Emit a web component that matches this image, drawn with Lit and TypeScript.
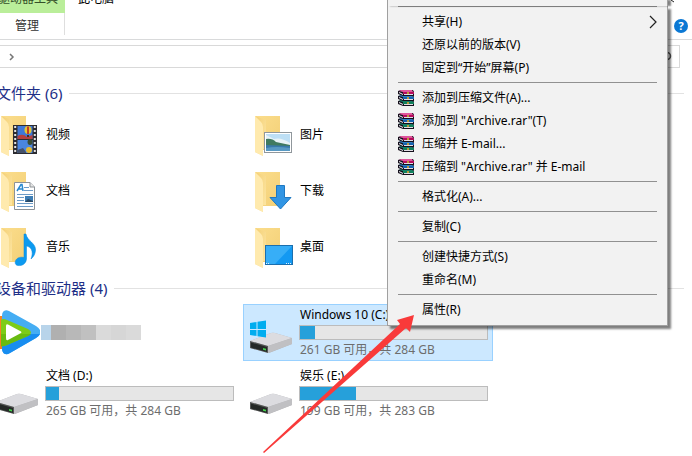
import { LitElement, html, svg, css } from "lit";
import { customElement, property } from "lit/decorators.js";

const folderBase = svg`
  <defs>
    <linearGradient id="back" x1="0" y1="0" x2="1" y2="1">
      <stop offset="0" stop-color="#fbdd8c" /><stop offset="1" stop-color="#f3d077" />
    </linearGradient>
    <linearGradient id="front" x1="0" y1="0" x2="1" y2="1">
      <stop offset="0" stop-color="#f4cf74" /><stop offset="1" stop-color="#fde7a6" />
    </linearGradient>
  </defs>
  <path d="M10 5H34V39H10Z" fill="url(#back)" />
  <path d="M9 5L20 9V38H17V45L9 41Z" fill="url(#front)" />
  <path d="M9 5L15 11Q17 13 17 16V45L9 41Z" fill="#ffeaae" />`;

const drive = svg`
  <path d="M4 32L25 24Q27 23.500 29 24L46 29V35L23 44L4 39Z" fill="#b4b4b7" />
  <path d="M4 32L25 24Q27 23.500 29 24L46 29L22 37Z" fill="#dcdce0" />
  <path d="M4 32L22 37V44L4 39Z" fill="#555756" />
  <path d="M5 33.500L21 38V43L5 38.500Z" fill="#252927" />
  <path d="M17 39L20 39.800V41.500L17 40.700Z" fill="#45d34e" />
  <path d="M22 37L46 29V35L22 44Z" fill="#c0c0c3" />`;

const pictures: Record<string, unknown> = {
  video: svg`${folderBase}
    <rect x="21" y="14" width="24" height="29" fill="#2c2c31" />
    <rect x="25.500" y="15" width="15" height="13" fill="#3f78d8" />
    <rect x="25.500" y="29" width="15" height="13" fill="#4a86e0" />
    <path d="M25.500 25Q31 22 35 26L40.500 24V28H25.500Z" fill="#b6403f" />
    <ellipse cx="36" cy="19" rx="3.500" ry="4" fill="#e6c631" />
    <path d="M35 15.500H37V23H35Z" fill="#c23c28" />
    <path d="M35 24H37V26H35Z" fill="#49301e" />
    <ellipse cx="38" cy="31" rx="2.500" ry="3" fill="#3a4c35" />
    <ellipse cx="37" cy="39" rx="3" ry="3" fill="#e6b931" />
    <path d="M25.500 39L31 37L34 41V42H25.500Z" fill="#45526b" />
    <path d="M23.200 15V43M42.800 15V43" stroke="#e4e4e4" stroke-width="2" stroke-dasharray="2 2" />`,
  documents: svg`${folderBase}
    <path d="M22.500 15.500H38L42.500 20V42.500H22.500Z" fill="#fff" stroke="#8d9296" />
    <path d="M38 15.500V20H42.500" fill="#e6e6e6" stroke="#8d9296" />
    <path d="M25 24L29 17.500H30L31 24M26.500 22H31" fill="none" stroke="#2989cf" stroke-width="1.500" />
    <path d="M32 20.500H37M32 23.500H41M25 27.500H41M25 30.500H32M25 33.500H32M25 36.500H41M25 39.500H41" stroke="#6d9cc8" />
    <rect x="33" y="29" width="8" height="6" fill="#3e7eb5" />
    <path d="M33 35L36 32L41 34V35Z" fill="#294a67" />`,
  music: svg`${folderBase}
    <path d="M32 11H34C35 18 44 20 43.500 27C43.300 31 41.500 34 39 36C42 28 39 24 34.500 23V36C34 41 30 43 26 42.500C22 42 22.500 37 26 35C28 34 30 34 32 34.500Z" fill="#0c9af0" stroke="#0787dc" stroke-width=".5" />`,
  images: svg`${folderBase}
    <rect x="18.500" y="21.500" width="27" height="20" fill="#fff" stroke="#90979c" />
    <rect x="20" y="23" width="24" height="17" fill="#bddff5" />
    <path d="M20 24L28 28Q35 26 44 32V34H20Z" fill="#e8f3f7" />
    <path d="M20 28Q26 27 30 31L44 34V36H20Z" fill="#407a60" />
    <path d="M20 34L44 35V40H20Z" fill="#3979aa" />
    <path d="M20 37Q30 35 44 37V40H20Z" fill="#5899c3" />`,
  downloads: svg`${folderBase}
    <path d="M30.500 18.500H38.500V30.500H45L34.500 42L24 30.500H30.500Z" fill="#3195e4" stroke="#1e78c2" />`,
  desktop: svg`${folderBase}
    <rect x="19.500" y="22.500" width="27" height="19" fill="#1399f2" stroke="#1b6fae" />
    <path d="M20 23H46L29 41H20Z" fill="#37aef7" />
    <path d="M20 40.500H23M40 40.500H46" stroke="#dff2ff" stroke-dasharray="1 1" />`,
  player: svg`
    <path d="M0 7H11V40H4Q0 40 0 35Z" fill="#f58220" />
    <path d="M10 7C10 2 13 0 17 2L44 17Q53 23 44 29L18 44C13 47 10 44 10 39Z" fill="#45adf3" />
    <path d="M10 25H48Q47 27.500 44 29L18 44C13 47 10 44 10 39Z" fill="#188df0" />
    <path d="M9 11Q11 9 15 11L36 20Q42 23.500 36 27L15 36Q10 38 9 37Z" fill="#7dcc17" />
    <path d="M9 25H39Q38 26 36 27L15 36Q10 38 9 37Z" fill="#69bb10" />
    <path d="M14 17Q14 14.500 16 15.500L29 22.500Q30 23.300 29 24L16 31Q14 32 14 29Z" fill="#fff" />`,
  drive,
  system: svg`${drive}
    <path d="M4 14L10.500 13V20H4ZM11.500 12.800L20 11.500V20H11.500ZM4 21H10.500V27L4 26ZM11.500 21H20V28.500L11.500 27.200Z" fill="#00adef" />`,
};

/* One book of the archive stack: cover, page edges, spine. */
const book = (y: number, cover: string, spine: string) => svg`
  <path d=${`M0 ${y + 1}L3 ${y}H15L16 ${y + 2}V${y + 6}H5L0 ${y + 4}Z`} fill="#15101c" />
  <path d=${`M1 ${y + 1}L3 ${y}H14L15 ${y + 2}H5Z`} fill=${cover} />
  <path d=${`M5 ${y + 2}H16V${y + 4}H5Z`} fill=${spine} />
  <path d=${`M1 ${y + 2}L5 ${y + 4}V${y + 5}L1 ${y + 3}Z`} fill="#f2eef4" />
  <path d=${`M6 ${y + 4.5}H15`} stroke="#e2dce4" />`;

const archive = svg`
  ${book(10, "#16806a", "#12805c")}
  ${book(5, "#2a7fc4", "#1762ae")}
  ${book(0, "#e0569c", "#b30c5c")}
  <path d="M9 2H11V4H9ZM9 7H11V9H9ZM9 12H11V14H9Z" fill="#b99a3a" />`;

@customElement("item-picture")
export class ItemPicture extends LitElement {
  @property() name = "drive";
  static styles = css`
    :host { display: block; flex: none; width: 48px; height: 48px; }
    .art { display: block; width: 48px; height: 48px; }
  `;
  render() {
    return html`<svg class="art" viewBox="0 0 48 48" aria-hidden="true">${pictures[this.name]}</svg>`;
  }
}

interface Drive { name: string; picture: string; used?: number; note?: string; selected?: boolean; }

const folders = [
  ["video", "视频"], ["images", "图片"],
  ["documents", "文档"], ["downloads", "下载"],
  ["music", "音乐"], ["desktop", "桌面"],
];

const drives: Drive[] = [
  { name: "", picture: "player" },
  { name: "Windows 10 (C:)", picture: "system", used: 8, note: "261 GB 可用，共 284 GB", selected: true },
  { name: "文档 (D:)", picture: "drive", used: 7, note: "265 GB 可用，共 284 GB" },
  { name: "娱乐 (E:)", picture: "drive", used: 30, note: "199 GB 可用，共 283 GB" },
];

interface Entry { label: string; archive?: boolean; submenu?: boolean; }

const menu: Entry[][] = [
  [{ label: "共享(H)", submenu: true }, { label: "还原以前的版本(V)" }, { label: "固定到“开始”屏幕(P)" }],
  [
    { label: "添加到压缩文件(A)...", archive: true },
    { label: "添加到 \"Archive.rar\"(T)", archive: true },
    { label: "压缩并 E-mail...", archive: true },
    { label: "压缩到 \"Archive.rar\" 并 E-mail", archive: true },
  ],
  [{ label: "格式化(A)..." }],
  [{ label: "复制(C)" }],
  [{ label: "创建快捷方式(S)" }, { label: "重命名(M)" }],
  [{ label: "属性(R)" }],
];

@customElement("context-menu")
export class ContextMenu extends LitElement {
  static styles = css`
    :host { display: block; }
    .menu {
      box-sizing: border-box; padding: 0 2px 4px; background: #f2f2f2;
      border: 1px solid #a0a0a0; border-top: 0; box-shadow: 3px 3px 2px rgba(0, 0, 0, .5);
    }
    .rule { height: 1px; margin: 3px 8px; border: 0; background: #919191; }
    .entry {
      display: flex; align-items: center; gap: 8px; width: 100%; height: 23px;
      padding: 0 8px; border: 0; background: none; color: #000; text-align: left;
      font: 12px/20px "Noto Sans", "Noto Sans CJK SC", sans-serif; white-space: nowrap;
    }
    .slot { flex: none; width: 16px; height: 16px; }
    .label { flex: 1; }
    .more { flex: none; width: 8px; height: 14px; }
  `;
  render() {
    return html`<div class="menu" role="menu">
      ${menu.map((group) => html`<hr class="rule" />${group.map((entry) => html`
        <button class="entry" role="menuitem">
          <svg class="slot" viewBox="0 0 16 16" aria-hidden="true">${entry.archive ? archive : ""}</svg>
          <span class="label">${entry.label}</span>
          ${entry.submenu ? html`<svg class="more" viewBox="0 0 8 14" aria-hidden="true">
            <path d="M1 1L7 7L1 13" fill="none" stroke="#222" stroke-width="1.200" /></svg>` : ""}
        </button>`)}`)}
    </div>`;
  }
}

@customElement("app-root")
export class AppRoot extends LitElement {
  static styles = css`
    :host {
      display: block; position: relative; min-height: 100vh; overflow: hidden; background: #fff; color: #000;
      font: 12px/18px "Noto Sans", "Noto Sans CJK SC", sans-serif;
    }
    .title { display: flex; height: 13px; align-items: flex-end; overflow: hidden; line-height: 20px; }
    .tools { display: flex; justify-content: flex-end; width: 65px; padding-right: 7px; box-sizing: border-box;
      background: #baee9a; color: #35502a; white-space: nowrap; height: 13px; align-items: flex-end; }
    .tools span, .name-now { margin-bottom: 4px; }
    .name-now { margin-left: 13px; }
    .corner { align-self: flex-start; width: 4px; height: 3px; margin: 0 17px 0 auto; }
    .ribbon { display: flex; justify-content: space-between; align-items: center; height: 26px;
      border-bottom: 1px solid #d9dadb; padding-right: 4px; }
    .tab { align-self: flex-start; width: 65px; height: 22px; padding: 3px 0 0 15px; border: 0;
      border-right: 1px solid #dedede; background: none; color: #333; text-align: left; font: inherit; }
    .help { width: 14px; height: 14px; padding: 0; border: 0; border-radius: 50%;
      background: #0b78d4; color: #fff; font: bold 11px/14px "Open Sans", sans-serif; text-align: center; }
    .address { display: flex; align-items: center; justify-content: space-between; height: 21px;
      margin: 5px 12px 0 0; padding: 0 7px 0 8px; border: 1px solid #d9d9d9; border-left: 0; }
    .crumb { width: 7px; height: 8px; }
    .search { width: 10px; height: 12px; }
    .content { margin-left: -11px; padding: 15px 8px 0 0; }
    .heading { display: flex; align-items: center; gap: 7px; margin: 0 0 6px; padding-left: 7px;
      color: #1e2f87; font-size: 15px; line-height: 20px; font-weight: 400; white-space: nowrap; }
    .heading::after { content: ""; flex: 1; height: 1px; background: #e2e2e2; }
    .tiles { display: grid; grid-template-columns: repeat(auto-fill, 250px); gap: 4px; margin-bottom: 5px; }
    .tile { display: flex; align-items: center; gap: 6px; height: 52px; padding: 0 3px; box-sizing: border-box; }
    .drive { height: 57px; padding: 0 4px 0 2px; gap: 5px; border: 1px solid transparent; }
    .selected { background: #cce8ff; border-color: #99d1ff; }
    .info { flex: 1; display: grid; row-gap: 1px; }
    .name, .note { padding-left: 1px; white-space: nowrap; }
    .note { color: #6d6d6d; }
    .bar { height: 15px; box-sizing: border-box; border: 1px solid #bcbcbc; background: #e6e6e6; }
    .fill { height: 100%; background: #26a0da; }
    .masked { width: 100px; height: 15px; margin-left: -4px;
      background: linear-gradient(90deg, #b8d4ea 10px, #b0b0b0 10px 25px, #b8b8b8 25px 40px, #c0c0c0 40px 55px, #dadada 55px 70px, #d6d6d6 70px 85px, #dadada 85px); }
    .popup { position: absolute; top: 3px; left: 387px; width: 281px; }
    .lead { position: absolute; top: 0; left: 387px; width: 279px; height: 6px; background: #f2f2f2;
      border: solid #a0a0a0; border-width: 0 1px; box-shadow: 3px 0 2px rgba(0, 0, 0, .5); }
    .pointer { position: absolute; left: 260px; top: 310px; width: 160px; height: 146px; pointer-events: none; }
  `;

  private driveTile(d: Drive) {
    return html`<div class="tile drive ${d.selected ? "selected" : ""}">
      <item-picture name=${d.picture}></item-picture>
      ${d.note ? html`<div class="info">
        <span class="name">${d.name}</span>
        <div class="bar" role="progressbar" aria-label=${d.name} aria-valuenow=${d.used}>
          <div class="fill" style="width:${d.used}%"></div>
        </div>
        <span class="note">${d.note}</span>
      </div>` : html`<div class="masked"></div>`}
    </div>`;
  }

  render() {
    return html`
      <header>
        <div class="title">
          <div class="tools"><span>驱动器工具</span></div><span class="name-now">此电脑</span>
          <svg class="corner" viewBox="0 0 4 3" aria-hidden="true"><path d="M0 0L3 2" stroke="#222" /></svg>
        </div>
        <div class="ribbon"><button class="tab">管理</button><button class="help" aria-label="帮助">?</button></div>
        <div class="address">
          <svg class="crumb" viewBox="0 0 7 8" aria-hidden="true"><path d="M2 1L5 4L2 7" fill="none" stroke="#777" stroke-width="1.500" /></svg>
          <svg class="search" viewBox="0 0 10 12" aria-hidden="true"><circle cx="5" cy="5" r="3.500" fill="none" stroke="#555" stroke-width="1.500" /><path d="M3 7L0 11" stroke="#555" stroke-width="1.500" /></svg>
        </div>
      </header>
      <main class="content">
        <h2 class="heading">文件夹 (6)</h2>
        <div class="tiles">
          ${folders.map(([picture, label]) => html`<div class="tile"><item-picture name=${picture}></item-picture><span>${label}</span></div>`)}
        </div>
        <h2 class="heading">设备和驱动器 (4)</h2>
        <div class="tiles">${drives.map((d) => this.driveTile(d))}</div>
      </main>
      <context-menu class="popup"></context-menu>
      <div class="lead"></div>
      <svg class="pointer" viewBox="260 310 160 146" aria-hidden="true">
        <path d="M263 452L400 324L397 320L414 315L410 332L406 328L264 453Z" fill="#f93a3a" />
      </svg>`;
  }
}
